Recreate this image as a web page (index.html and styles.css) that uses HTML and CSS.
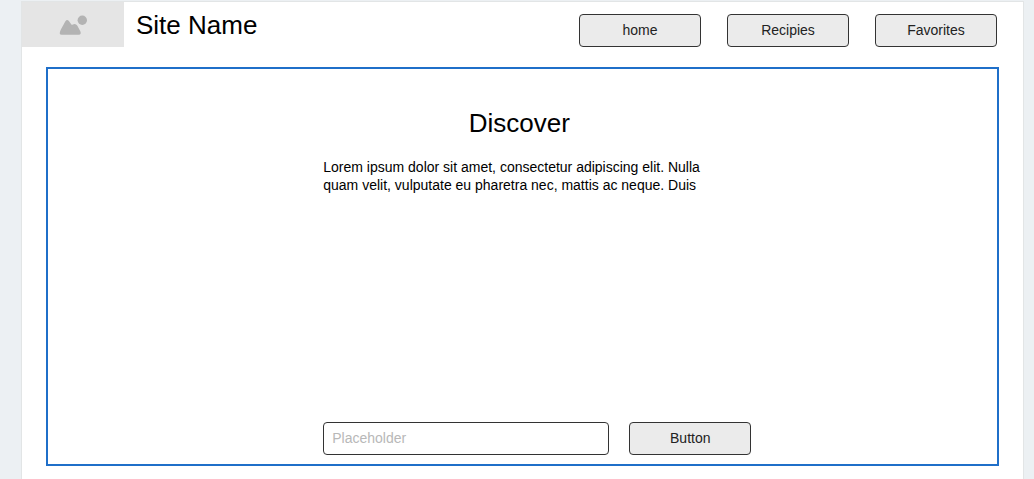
FILE: index.html
```html
<!DOCTYPE html>
<html lang="en">
<head>
<meta charset="utf-8">
<meta name="viewport" content="width=device-width, initial-scale=1">
<title>Site Name</title>
<link rel="stylesheet" href="styles.css">
</head>
<body>
<div class="page">
  <header class="header">
    <div class="logo">
      <svg class="logo-icon" width="28" height="20" viewBox="0 0 28 20" aria-hidden="true">
        <circle cx="23.300" cy="5.300" r="4.700"/>
        <path d="M2.500 19.700Q.300 19.700 .900 17.200Q1.200 15.700 2 14.300L6.400 6.300Q8 3.700 9.900 6.100L12.200 9.300Q12.900 10.200 13.900 9.500Q16.600 7.900 18.200 10.600L21.200 16Q22.800 19.700 19.700 19.700Z"/>
      </svg>
    </div>
    <h1 class="site-name">Site Name</h1>
    <nav class="nav" aria-label="Main">
      <button class="button" type="button">home</button>
      <button class="button" type="button">Recipies</button>
      <button class="button" type="button">Favorites</button>
    </nav>
  </header>
  <main class="hero">
    <section class="intro">
      <h2 class="title">Discover</h2>
      <p class="text">Lorem ipsum dolor sit amet, consectetur adipiscing elit. Nulla quam velit, vulputate eu pharetra nec, mattis ac neque. Duis</p>
    </section>
    <form class="form">
      <input class="field" type="text" placeholder="Placeholder" aria-label="Placeholder">
      <button class="button" type="button">Button</button>
    </form>
  </main>
</div>
</body>
</html>
```
FILE: styles.css
```css
* {
  box-sizing: border-box;
}

body {
  margin: 0;
  padding-top: 1px;
  background: #ecf0f3;
  color: #000;
  font: 14px/18px "Liberation Sans", Arial, sans-serif;
}

.page {
  min-height: calc(100vh - 1px);
  margin: 0 10px 0 21px;
  padding-bottom: 12px;
  border: 1px solid #e2e5e6;
  border-bottom: 0;
  background: #fff;
}

.header {
  display: flex;
  align-items: flex-start;
  padding-right: 26px;
}

.logo {
  display: flex;
  align-items: center;
  justify-content: center;
  width: 102px;
  height: 45px;
  background: #e5e5e5;
}

.logo-icon {
  fill: #b3b3b3;
}

.site-name,
.title {
  margin: 0;
  font-size: 26px;
  line-height: 30px;
  font-weight: 400;
}

.site-name {
  padding: 8px 0 0 12px;
}

.nav {
  display: flex;
  gap: 26px;
  margin-left: auto;
  padding-top: 12px;
}

.button,
.field {
  height: 33px;
  border: 1px solid #333;
  border-radius: 4px;
  font: inherit;
}

.button {
  width: 122px;
  padding: 0 0 2px;
  background: #ebebeb;
  color: #222;
}

.hero {
  display: flex;
  flex-direction: column;
  justify-content: space-between;
  min-height: 399px;
  margin: 20px 24px 0;
  padding: 39px 24px 9px 27.5%;
  border: 2px solid #1f6fc9;
}

.intro {
  max-width: 392px;
}

.title {
  text-align: center;
}

.text {
  margin: 20px 0 0;
}

.form {
  display: flex;
  gap: 20px;
}

.field {
  width: 286px;
  min-width: 0;
  padding: 0 8px 2px;
  background: #fff;
  color: #222;
}

.field::placeholder {
  color: #b8b8b8;
  opacity: 1;
}
```
